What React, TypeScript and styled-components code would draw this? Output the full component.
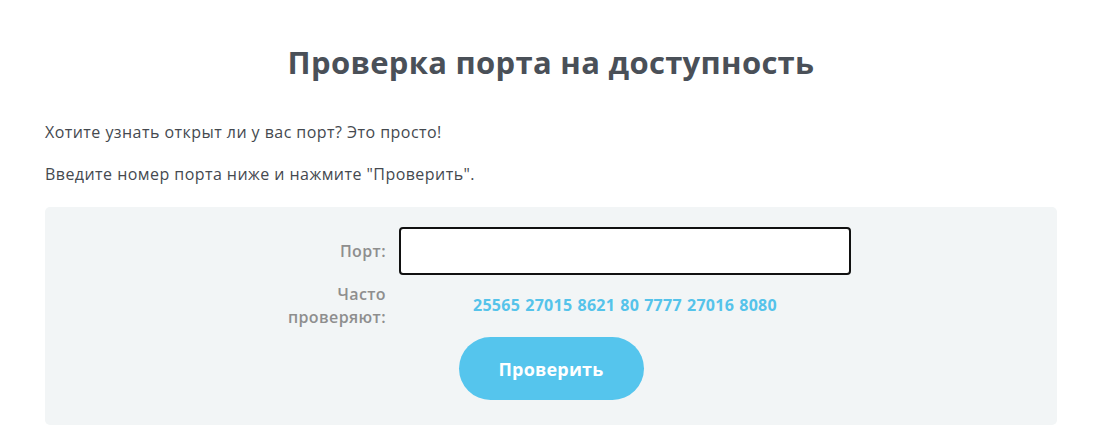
import React from "react";
import styled, { createGlobalStyle } from "styled-components";

const GlobalStyle = createGlobalStyle`
  html, body {
    margin: 0;
    padding: 0;
    background: #ffffff;
  }
  body {
    font-family: "Open Sans", "Noto Sans", sans-serif;
  }
`;

const Page = styled.main`
  padding: 0 37px 0 45px;
`;

const Title = styled.h1`
  margin: 0;
  padding-top: 40px;
  text-align: center;
  font-size: 31px;
  font-weight: 700;
  letter-spacing: 0.3px;
  line-height: 44px;
  color: #4a5058;
`;

const Text = styled.p`
  margin: 0;
  font-size: 16px;
  letter-spacing: 0.45px;
  line-height: 20px;
  color: #45494f;
  & + & {
    margin-top: 22px;
  }
`;

const Intro = styled.div`
  padding-top: 38px;
`;

const Panel = styled.section`
  margin-top: 23px;
  background: #f2f5f6;
  border-radius: 5px;
  padding: 20px 0 25px;
  display: flex;
  flex-direction: column;
  align-items: center;
`;

const Form = styled.div`
  align-self: flex-start;
  margin-left: 225px;
  display: grid;
  grid-template-columns: 116px 452px;
  column-gap: 13px;
  row-gap: 8px;
  align-items: center;
`;

const Label = styled.label`
  text-align: right;
  font-size: 16px;
  font-weight: 600;
  letter-spacing: 0.4px;
  line-height: 23px;
  color: #8e8e8e;
`;

const Input = styled.input`
  box-sizing: border-box;
  width: 100%;
  height: 48px;
  border: 2px solid #111111;
  border-radius: 4px;
  background: #ffffff;
  padding: 0 6px;
  font-size: 16px;
  outline: none;
  caret-color: #333333;
`;

const Ports = styled.div`
  display: flex;
  justify-content: center;
  gap: 5px;
  padding-bottom: 2px;
`;

const PortLink = styled.a`
  font-size: 16px;
  font-weight: 700;
  letter-spacing: 0.3px;
  color: #55c3ea;
  text-decoration: none;
  cursor: pointer;
`;

const Button = styled.button`
  margin-top: 8px;
  width: 185px;
  height: 63px;
  border: none;
  border-radius: 32px;
  background: #55c5ed;
  color: #ffffff;
  font-family: inherit;
  font-size: 18px;
  font-weight: 700;
  letter-spacing: 0.2px;
  cursor: pointer;
`;

const ports = ["25565", "27015", "8621", "80", "7777", "27016", "8080"];

const App: React.FC = () => {
  return (
    <>
      <GlobalStyle />
      <Page>
        <Title>Проверка порта на доступность</Title>
        <Intro>
          <Text>Хотите узнать открыт ли у вас порт? Это просто!</Text>
          <Text>Введите номер порта ниже и нажмите "Проверить".</Text>
        </Intro>
        <Panel>
          <Form>
            <Label htmlFor="port">Порт:</Label>
            <Input id="port" type="text" autoFocus />
            <Label>Часто проверяют:</Label>
            <Ports>
              {ports.map((port) => (
                <PortLink key={port}>{port}</PortLink>
              ))}
            </Ports>
          </Form>
          <Button>Проверить</Button>
        </Panel>
      </Page>
    </>
  );
};

export default App;
